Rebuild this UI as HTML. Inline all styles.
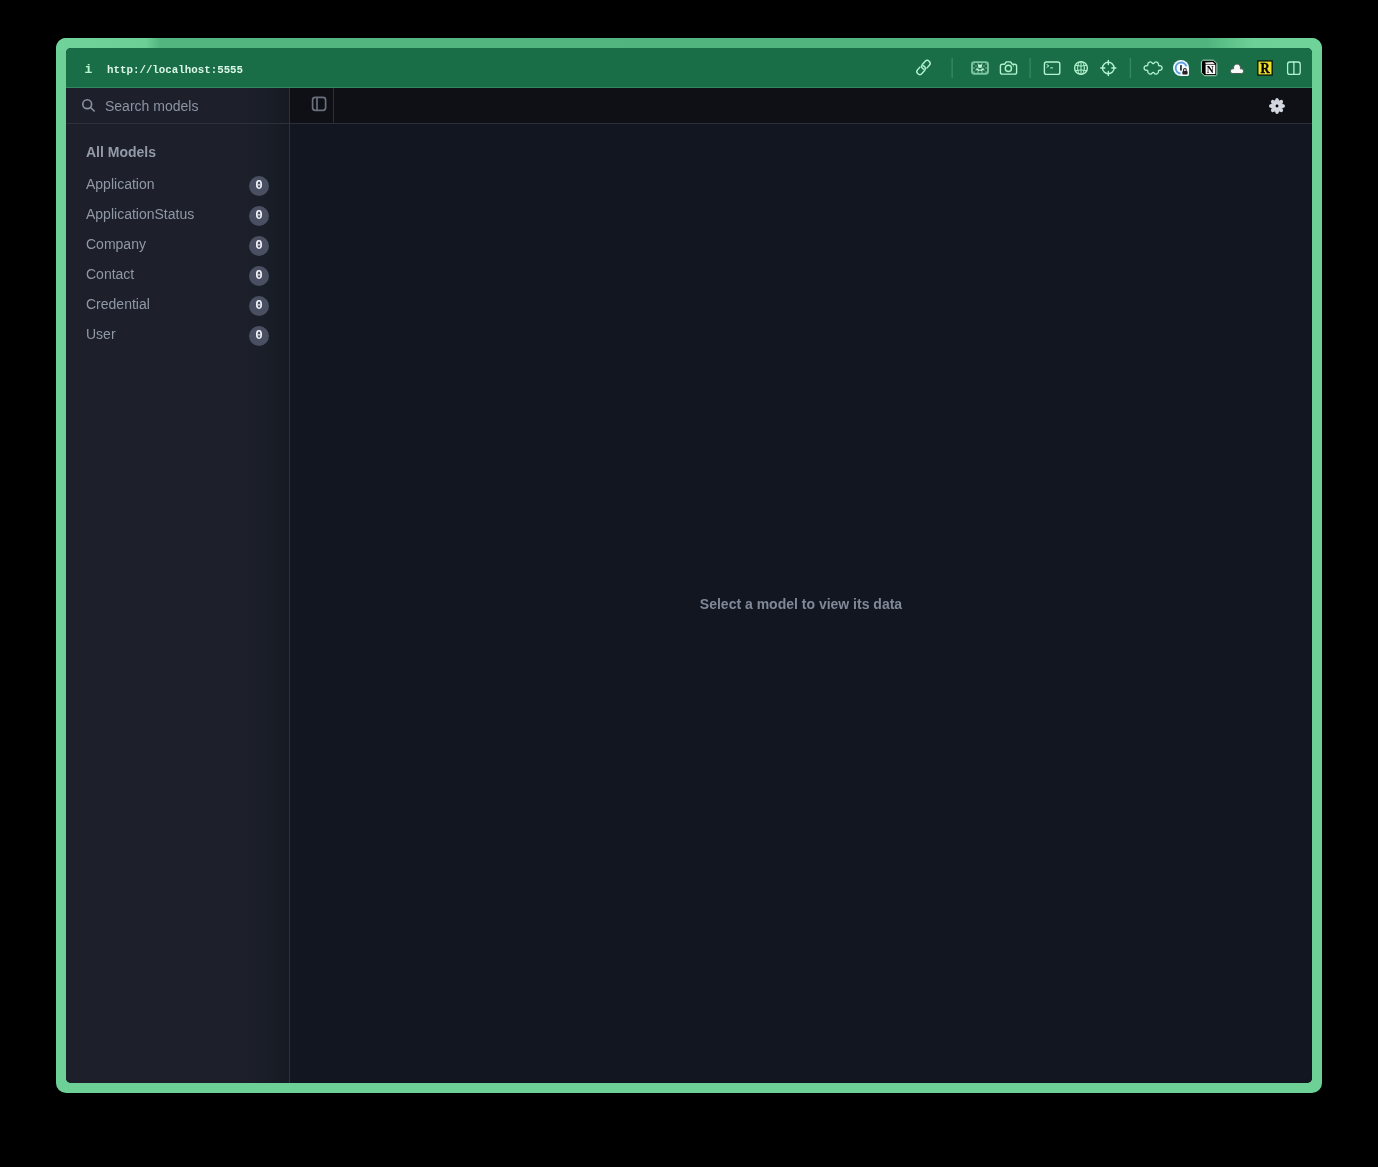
<!DOCTYPE html>
<html><head><meta charset="utf-8">
<style>
*{margin:0;padding:0;box-sizing:border-box}
html,body{width:1378px;height:1167px;background:#000;overflow:hidden;font-family:"Liberation Sans",sans-serif}
#frame{position:absolute;left:56px;top:38px;width:1266px;height:1055px;border-radius:10px;background:#6dd197}
#topb{position:absolute;left:0;top:0;width:1266px;height:12px;border-radius:10px 10px 0 0;background:linear-gradient(90deg,#6fd39a 0px,#6bcf96 90px,#52b57f 104px,#51b47e 1150px,#56ba83 1160px,#6dd197 1198px,#6fd39a 1266px)}
#win{will-change:transform;position:absolute;left:10px;top:10px;width:1246px;height:1035px;border-radius:5px;overflow:hidden;background:#121720}
#title{position:absolute;left:0;top:0;width:1246px;height:40px;background:#196e47;box-shadow:inset 0 -1px 0 #338660}
#info{position:absolute;left:18.5px;top:13.5px;font:bold 13px/16px "Liberation Mono",monospace;color:#b8f2cf}
#url{position:absolute;left:41px;top:15.5px;font:bold 10.8px/12px "Liberation Mono",monospace;color:#dcf6e5}
#side{position:absolute;left:0;top:40px;width:224px;height:995px;background:linear-gradient(90deg,#1d202b 0px,#1d202b 172px,#1a1e28 196px,#151a23 223px);border-right:1px solid #2c313c}
#search{position:absolute;left:0;top:0;width:223px;height:36px;border-bottom:1px solid #2c313c}
#search .t{position:absolute;left:39px;top:10px;font-size:14px;line-height:16px;color:#8b93a3}
#main{position:absolute;left:224px;top:40px;width:1022px;height:995px;background:#111620}
#tool{position:absolute;left:0;top:0;width:1022px;height:36px;background:#0e1015;border-bottom:1px solid #2b2f3a}
#tog{position:absolute;left:0;top:0;width:44px;height:35px;border-right:1px solid #2a2f3a}
.hdr{position:absolute;left:20px;top:56px;font-weight:bold;font-size:14px;line-height:16px;color:#939aa8}
.it{position:absolute;left:20px;font-size:14px;line-height:16px;color:#9098a6}
.bd{position:absolute;left:183px;width:20px;height:20px;border-radius:10px;background:#4a5062;color:#f4f6f9;font:bold 12.5px/20px "Liberation Mono",monospace;text-align:center}
#msg{position:absolute;left:0;width:1022px;top:508px;text-align:center;font-weight:bold;font-size:14px;line-height:16px;color:#818999}
#ov{will-change:transform;position:absolute;left:0;top:0;width:1378px;height:1167px}
</style></head><body>
<div id="frame"><div id="topb"></div><div id="win">
 <div id="title">
  <div id="info">i</div>
  <div id="url">http://localhost:5555</div>
 </div>
 <div id="side">
  <div id="search"><div class="t">Search models</div></div>
  <div class="hdr">All Models</div>
  <div class="it" style="top:88px">Application</div><div class="bd" style="top:88px">0</div>
  <div class="it" style="top:118px">ApplicationStatus</div><div class="bd" style="top:118px">0</div>
  <div class="it" style="top:148px">Company</div><div class="bd" style="top:148px">0</div>
  <div class="it" style="top:178px">Contact</div><div class="bd" style="top:178px">0</div>
  <div class="it" style="top:208px">Credential</div><div class="bd" style="top:208px">0</div>
  <div class="it" style="top:238px">User</div><div class="bd" style="top:238px">0</div>
 </div>
 <div id="main">
  <div id="tool"><div id="tog"></div></div>
  <div id="msg">Select a model to view its data</div>
 </div>
</div></div>
<svg id="ov" width="1378" height="1167" viewBox="0 0 1378 1167">
 <g fill="none" stroke="#b2f3cf" stroke-width="1.4" stroke-linecap="round" stroke-linejoin="round">
  <!-- link -->
  <g transform="translate(923.5 67.5) rotate(-48)">
   <path d="M-0.991,1.45 A2.9,2.9 0 0 1 1.52,-2.9 L5.52,-2.9 A2.9,2.9 0 0 1 5.52,2.9 L1.8,2.9"/>
   <path d="M0.991,-1.45 A2.9,2.9 0 0 1 -1.52,2.9 L-5.52,2.9 A2.9,2.9 0 0 1 -5.52,-2.9 L-1.8,-2.9"/>
  </g>
  <!-- camera -->
  <path d="M1002.4,64.3 H1004.2 Q1004.8,64.3 1005.1,63.7 L1005.6,62.6 Q1006,61.9 1006.8,61.9 H1010 Q1010.8,61.9 1011.2,62.6 L1011.7,63.7 Q1012,64.3 1012.6,64.3 H1014.6 Q1016.6,64.3 1016.6,66.3 V72.2 Q1016.6,74.1 1014.6,74.1 H1002.4 Q1000.4,74.1 1000.4,72.2 V66.3 Q1000.4,64.3 1002.4,64.3Z"/>
  <circle cx="1008.4" cy="68.4" r="3.1"/>
  <!-- terminal -->
  <rect x="1044.4" y="62" width="15.4" height="12.4" rx="2"/>
  <path d="M1046.9,64.6 L1048.9,65.9 L1046.9,67.2" stroke-width="1"/>
  <!-- globe -->
  <circle cx="1081" cy="68" r="6.4"/>
  <ellipse cx="1081" cy="68" rx="3.4" ry="6.4" stroke-width="1"/>
  <path d="M1075.3,65.3 Q1081,67 1086.7,65.3 M1075.3,70.7 Q1081,69 1086.7,70.7 M1081,61.6 V74.4" stroke-width="1"/>
  <!-- crosshair -->
  <circle cx="1108.3" cy="68" r="5.8"/>
  <path d="M1108.3,60.5 V64.5 M1108.3,71.5 V75.5 M1100.8,68 H1104.8 M1111.8,68 H1115.8"/>
  <!-- split -->
  <rect x="1287.6" y="62" width="12.6" height="12.4" rx="2.2" stroke-width="1.3"/>
  <path d="M1293.9,62 V74.4" stroke-width="1.3"/>
 </g>
 <!-- image inner -->
 <defs><pattern id="chk" x="973" y="63" width="4" height="4" patternUnits="userSpaceOnUse"><rect x="0" y="0" width="2" height="2" fill="#46946d"/><rect x="2" y="2" width="2" height="2" fill="#46946d"/><rect x="2" y="0" width="2" height="2" fill="#1a6645"/><rect x="0" y="2" width="2" height="2" fill="#1a6645"/></pattern></defs>
 <rect x="972.6" y="62.6" width="15.2" height="11.2" fill="url(#chk)"/>
 <rect x="972" y="62.1" width="16" height="11.7" rx="2.2" fill="none" stroke="#7ac6a0" stroke-width="1.9"/>
 <g fill="#c0f5d9">
  <path d="M978,64 L979.1,64.9 L980,64 L980.9,64.9 L982,64 V66 Q982,67.9 980,67.9 Q978,67.9 978,66Z"/>
  <path d="M976.9,69.1 L978.9,70.4 M983.1,69.1 L981.1,70.4" stroke="#c0f5d9" stroke-width="1.7" stroke-linecap="round"/>
 </g>
 <g fill="#b2f3cf">
  <circle cx="1013.4" cy="65.9" r="0.65"/>
  <rect x="1050.2" y="67.4" width="2.8" height="1"/>
 </g>
 <!-- separators -->
 <g fill="#3f9169">
  <rect x="951.6" y="58" width="1" height="20"/>
  <rect x="1029.6" y="58" width="1" height="20"/>
  <rect x="1129.8" y="58" width="1" height="20"/>
 </g>
 <!-- puzzle -->
 <path d="M1147.82,64.60 A2.4,2.4 0 0 1 1152.28,63.11 A1.0,1.0 0 0 0 1154.02,63.11 A2.4,2.4 0 0 1 1158.48,64.59 A1.0,1.0 0 0 0 1159.57,65.71 A2.3,2.3 0 1 1 1159.57,70.29 A1.0,1.0 0 0 0 1158.48,71.41 A2.4,2.4 0 0 1 1154.02,72.89 A1.0,1.0 0 0 0 1152.28,72.89 A2.4,2.4 0 0 1 1147.82,71.40 A1.0,1.0 0 0 0 1146.70,70.28 A2.3,2.3 0 1 1 1146.70,65.72 A1.0,1.0 0 0 0 1147.82,64.60Z" fill="none" stroke="#b2f3cf" stroke-width="1.35"/>
 <!-- 1password -->
 <path d="M1189,68 V74.6 Q1189,76 1187.6,76 H1181 A8,8 0 1 1 1189,68Z" fill="#f2fbfd"/>
 <path d="M1186.4,66.3 A5.5,5.5 0 1 0 1180.6,73.5" fill="none" stroke="#5a9fe6" stroke-width="1.9"/>
 <rect x="1180" y="65.1" width="1.9" height="5.5" fill="#3b3b3d"/>
 <rect x="1182.3" y="71" width="5.3" height="3.6" rx="1" fill="#2b2024"/>
 <path d="M1183.6,71.2 V69.8 A1.3,1.3 0 0 1 1186.2,69.8 V71.2" fill="none" stroke="#2b2024" stroke-width="1.1"/>
 <!-- notion -->
 <path d="M1202.2,61 L1203.2,60.2 H1213.3 L1216.8,63.3 V74.8 L1215.9,75.7 H1204.4 L1201.4,72.6 V61.8Z" fill="#000" stroke="#c2f3d9" stroke-width="0.9"/>
 <path d="M1205,62.4 L1212.7,61.9 L1214.9,63.9 L1205.9,64.3Z" fill="#e6e6e6"/>
 <rect x="1205.6" y="64.7" width="9.7" height="9.4" fill="#fbfbfb"/>
 <text x="1210.3" y="72.7" font-family="Liberation Serif" font-weight="bold" font-size="9.6" text-anchor="middle" fill="#000">N</text>
 <!-- cloud -->
 <path d="M1232.65,73.5 A2.35,2.35 0 0 1 1232.65,68.8 H1233.75 A3.5,3.5 0 1 1 1240.25,68.8 H1241.35 A2.35,2.35 0 0 1 1241.35,73.5Z" fill="#fbfbfb" stroke="#535d58" stroke-width="1"/>
 <!-- R -->
 <rect x="1257.2" y="60.3" width="15.6" height="15.4" fill="#07140a"/>
 <rect x="1258.5" y="61.6" width="13" height="12.8" fill="#eddf2c"/>
 <text x="1260.4" y="72.8" font-family="Liberation Serif" font-weight="bold" font-size="14" textLength="9.2" lengthAdjust="spacingAndGlyphs" fill="#000" stroke="#000" stroke-width="0.35">R</text>
 <!-- search icon -->
 <g fill="none" stroke="#8b92a1" stroke-width="1.6" stroke-linecap="round">
  <circle cx="87.2" cy="104.2" r="4.4"/>
  <path d="M90.5,107.5 L94.2,111"/>
 </g>
 <!-- toggle -->
 <g fill="none" stroke="#6a707d" stroke-width="1.7">
  <rect x="312.6" y="97.4" width="13" height="13" rx="2.6"/>
  <path d="M317,97.4 V110.4"/>
 </g>
 <!-- gear -->
 <path d="M1275.09,101.38 L1276.31,98.73 L1277.69,98.73 L1278.91,101.38 L1281.65,100.38 L1282.62,101.35 L1281.62,104.09 L1284.27,105.31 L1284.27,106.69 L1281.62,107.91 L1282.62,110.65 L1281.65,111.62 L1278.91,110.62 L1277.69,113.27 L1276.31,113.27 L1275.09,110.62 L1272.35,111.62 L1271.38,110.65 L1272.38,107.91 L1269.73,106.69 L1269.73,105.31 L1272.38,104.09 L1271.38,101.35 L1272.35,100.38Z" fill="#d3d8e0" stroke="#d3d8e0" stroke-width="1.1" stroke-linejoin="round"/>
 <circle cx="1277" cy="106" r="1.45" fill="#000"/>
</svg>
</body></html>
